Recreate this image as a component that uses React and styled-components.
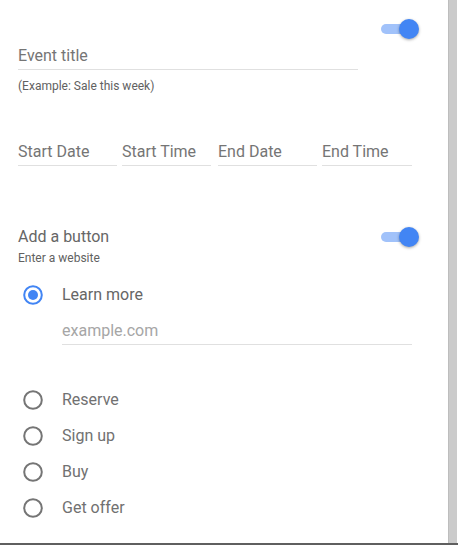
import React from "react";
import styled, { createGlobalStyle } from "styled-components";

const Global = createGlobalStyle`
  html, body { margin: 0; padding: 0; background: #fff; }
  body { font-family: Roboto, "Noto Sans", Arial, sans-serif; }
  * { box-sizing: border-box; }
`;

const Frame = styled.div`
  display: flex;
  width: 458px;
  height: 545px;
  border-bottom: 2px solid #5f5f5f;
  background: #fff;
`;

const Panel = styled.div`
  flex: 0 0 448px;
  padding: 19px 29px 0 18px;
  display: flex;
  flex-direction: column;
`;

const Scrollbar = styled.div`
  flex: 0 0 9px;
  background: #cbcbcb;
  border-left: 1px solid #bdbdbd;
`;

const EndStrip = styled.div`
  flex: 0 0 1px;
  background: #fff;
`;

const ToggleRow = styled.div`
  display: flex;
  justify-content: flex-end;
  height: 20px;
`;

const SwitchBox = styled.div`
  position: relative;
  width: 38px;
  height: 20px;
  flex: 0 0 auto;
`;

const Track = styled.div`
  position: absolute;
  left: 0;
  top: 5px;
  width: 34px;
  height: 10px;
  border-radius: 5px;
  background: #a1c2fa;
`;

const Thumb = styled.div`
  position: absolute;
  right: 0;
  top: 0;
  width: 20px;
  height: 20px;
  border-radius: 50%;
  background: #4285f4;
  box-shadow: 0 1px 3px rgba(0, 0, 0, 0.35);
`;

const Switch = () => (
  <SwitchBox>
    <Track />
    <Thumb />
  </SwitchBox>
);

const Field = styled.div`
  width: ${(p) => p.$w}px;
  margin-top: ${(p) => p.$mt || 0}px;
  margin-left: ${(p) => p.$ml || 0}px;
  margin-right: ${(p) => p.$mr || 0}px;
  padding-bottom: 3px;
  border-bottom: 1px solid #e0e0e0;
  font-size: 16px;
  line-height: 20px;
  color: ${(p) => (p.$placeholder ? "#a6a6a6" : "#757575")};
  white-space: nowrap;
`;

const Hint = styled.div`
  margin-top: ${(p) => p.$mt}px;
  font-size: 12px;
  line-height: 16px;
  color: #616161;
`;

const DateRow = styled.div`
  display: flex;
  margin-top: 48px;
`;

const SectionRow = styled.div`
  display: flex;
  justify-content: space-between;
  align-items: center;
  height: 20px;
  margin-top: 61px;
`;

const SectionTitle = styled.div`
  font-size: 16px;
  line-height: 20px;
  color: #666;
`;

const RadioRow = styled.div`
  display: flex;
  align-items: center;
  height: 20px;
  margin-top: ${(p) => p.$mt}px;
  padding-left: 5px;
  gap: 19px;
`;

const RadioLabel = styled.span`
  font-size: 16px;
  line-height: 20px;
  color: ${(p) => (p.$on ? "#666" : "#717171")};
`;

const RadioList = styled.div`
  display: flex;
  flex-direction: column;
  gap: 16px;
  margin-top: 45px;
`;

const Radio = ({ on }) => (
  <svg width="20" height="20" viewBox="0 0 20 20">
    <circle
      cx="10"
      cy="10"
      r="8.8"
      fill="none"
      stroke={on ? "#4285f4" : "#757575"}
      strokeWidth="2"
    />
    {on && <circle cx="10" cy="10" r="5" fill="#4285f4" />}
  </svg>
);

const options = ["Reserve", "Sign up", "Buy", "Get offer"];

export default function App() {
  return (
    <>
      <Global />
      <Frame>
        <Panel>
          <ToggleRow>
            <Switch />
          </ToggleRow>
          <Field $w={340} $mt={7}>Event title</Field>
          <Hint $mt={8}>(Example: Sale this week)</Hint>
          <DateRow>
            <Field $w={99} $mr={5}>Start Date</Field>
            <Field $w={89} $mr={7}>Start Time</Field>
            <Field $w={99} $mr={5}>End Date</Field>
            <Field $w={90}>End Time</Field>
          </DateRow>
          <SectionRow>
            <SectionTitle>Add a button</SectionTitle>
            <Switch />
          </SectionRow>
          <Hint $mt={3}>Enter a website</Hint>
          <RadioRow $mt={19}>
            <Radio on />
            <RadioLabel $on>Learn more</RadioLabel>
          </RadioRow>
          <Field $w={350} $ml={44} $mt={16} $placeholder>
            example.com
          </Field>
          <RadioList>
            {options.map((o) => (
              <RadioRow key={o} $mt={0}>
                <Radio />
                <RadioLabel>{o}</RadioLabel>
              </RadioRow>
            ))}
          </RadioList>
        </Panel>
        <Scrollbar />
        <EndStrip />
      </Frame>
    </>
  );
}
